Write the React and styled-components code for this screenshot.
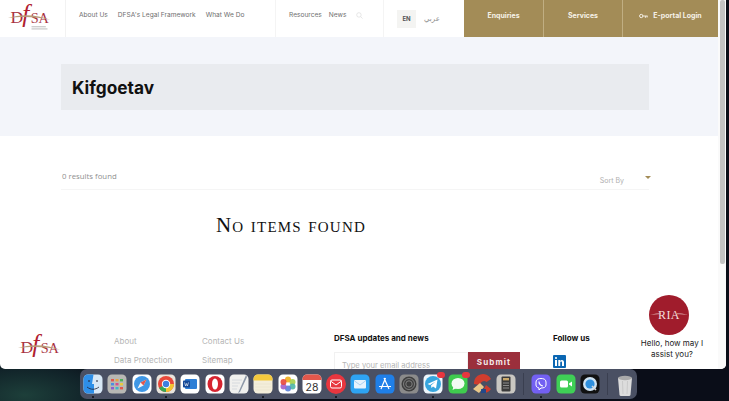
import styled, { createGlobalStyle } from "styled-components";

const GlobalStyle = createGlobalStyle`
  html, body {
    margin: 0;
    padding: 0;
    width: 729px;
    height: 401px;
    overflow: hidden;
    background: #0a0d18;
    font-family: Inter, "Liberation Sans", sans-serif;
  }
`;

const Desktop = styled.div`
  width: 729px;
  height: 401px;
  overflow: hidden;
  display: flex;
  flex-direction: column;
  background: radial-gradient(ellipse 110px 45px at 25px 395px, #1d3f3a 0%, rgba(20, 44, 48, 0.7) 60%, transparent 100%), #0a0d18;
`;

const Window = styled.div`
  position: relative;
  width: 726px;
  height: 369px;
  flex: none;
  display: flex;
  overflow: hidden;
  background: #fff;
  border-bottom-right-radius: 5px;
  border-bottom-left-radius: 5px;
`;

const Page = styled.div`
  width: 718px;
  flex: none;
  display: flex;
  flex-direction: column;
`;

const Scrollbar = styled.div`
  flex: 1;
  padding: 0 1px 0 2px;
  background: #fafafa;
`;

const Thumb = styled.div`
  height: 264px;
  background: #c2c2c2;
  border-radius: 2px;
`;

const Header = styled.header`
  height: 37px;
  flex: none;
  display: flex;
  background: #fff;
`;

const LogoCell = styled.div`
  width: 66px;
  display: flex;
  align-items: center;
  padding-left: 8px;
  box-sizing: border-box;
  border-right: 1px solid #f2f2f2;
`;

const NavGroup = styled.nav`
  width: ${(p) => p.$width}px;
  box-sizing: border-box;
  display: flex;
  align-items: center;
  gap: ${(p) => p.$gap}px;
  padding: 0 0 7px ${(p) => p.$left}px;
  border-right: 1px solid #f4f4f4;
`;

const NavLink = styled.a`
  font-size: 6.6px;
  color: #6f6f6f;
  white-space: nowrap;
`;

const LangCell = styled.div`
  width: 80px;
  display: flex;
  align-items: center;
  gap: 8px;
  padding-left: 13px;
  box-sizing: border-box;
`;

const LangActive = styled.span`
  width: 19px;
  height: 18px;
  display: flex;
  align-items: center;
  justify-content: center;
  background: #f4f4f2;
  font-size: 6px;
  font-weight: 700;
  color: #555;
`;

const LangOther = styled.span`
  font-size: 7px;
  color: #8c8c8c;
  font-family: "DejaVu Sans", sans-serif;
`;

const GoldButton = styled.a`
  width: ${(p) => p.$width}px;
  box-sizing: border-box;
  display: flex;
  align-items: center;
  justify-content: center;
  gap: 5px;
  padding-bottom: 6px;
  background: #a38c57;
  border-right: 1px solid #c0ae82;
  font-size: 7px;
  font-weight: 700;
  color: #f6f2e8;
  white-space: nowrap;
  &:last-child {
    border-right: none;
  }
`;

const Hero = styled.section`
  height: 99px;
  flex: none;
  box-sizing: border-box;
  padding: 27px 69px 26px 61px;
  background: #f3f5fa;
`;

const TitleBox = styled.div`
  height: 46px;
  display: flex;
  align-items: center;
  padding-left: 11px;
  background: #e9ebef;
`;

const Title = styled.h1`
  margin: 0;
  font-size: 17.3px;
  font-weight: 700;
  color: #111;
`;

const Results = styled.section`
  height: 164px;
  flex: none;
  box-sizing: border-box;
  padding: 0 69px 0 61px;
`;

const ResultsBar = styled.div`
  height: 54px;
  box-sizing: border-box;
  display: flex;
  justify-content: space-between;
  padding: 35px 0 0 1px;
  border-bottom: 1px solid #f5f5f5;
`;

const ResultCount = styled.span`
  font-family: "Open Sans", sans-serif;
  font-size: 7.8px;
  color: #8f8f8f;
`;

const SortBy = styled.div`
  display: flex;
  gap: 21px;
  align-items: flex-start;
  font-size: 7px;
  color: #b0b0b0;
  padding-top: 5px;
  margin-right: -2px;
`;

const Caret = styled.span`
  width: 0;
  height: 0;
  border-left: 3.5px solid transparent;
  border-right: 3.5px solid transparent;
  border-top: 3.5px solid #a38c57;
`;

const NoItems = styled.h2`
  margin: 23px 0 0 155px;
  font-family: "Liberation Serif", serif;
  font-size: 21px;
  font-weight: 400;
  font-variant: small-caps;
  letter-spacing: 1.2px;
  color: #111;
`;

const Footer = styled.footer`
  flex: 1;
  display: flex;
  overflow: hidden;
  padding-top: 33px;
`;

const FooterLogo = styled.div`
  width: 114px;
  padding-left: 18px;
  box-sizing: border-box;
`;

const LinkColumn = styled.div`
  width: 88px;
  display: flex;
  flex-direction: column;
  gap: 9px;
  padding-top: 3px;
`;

const FooterLink = styled.a`
  font-size: 8px;
  line-height: 10px;
  color: #b5b5b5;
  white-space: nowrap;
`;

const Newsletter = styled.div`
  width: 219px;
  margin-left: 44px;
`;

const FooterHeading = styled.h3`
  margin: 0 0 9px;
  font-size: 8px;
  line-height: 10px;
  font-weight: 700;
  color: #111;
`;

const Subscribe = styled.div`
  width: 186px;
  height: 30px;
  display: flex;
`;

const EmailField = styled.div`
  flex: 1;
  box-sizing: border-box;
  padding: 8px 0 0 7px;
  border: 1px solid #f1f1f1;
  font-size: 7.6px;
  color: #b5b5b5;
  white-space: nowrap;
`;

const Submit = styled.button`
  width: 52px;
  border: none;
  padding: 0 0 10px;
  background: #9b2f3c;
  font-family: inherit;
  font-size: 8px;
  font-weight: 700;
  letter-spacing: 1.1px;
  color: #f5e9e9;
`;

const Chat = styled.div`
  position: absolute;
  left: 638px;
  top: 295px;
  width: 68px;
  display: flex;
  flex-direction: column;
  align-items: center;
  gap: 3px;
`;

const ChatAvatar = styled.div`
  position: relative;
  width: 40px;
  height: 40px;
  margin-left: -6px;
  border-radius: 50%;
  background: #a01c2c;
  display: flex;
  align-items: center;
  justify-content: center;
  font-family: "Liberation Serif", serif;
  font-size: 12px;
  letter-spacing: 0.4px;
  color: #f3dfdf;
`;

const AvatarSwoosh = styled.svg`
  position: absolute;
  left: 0;
  top: 14px;
`;

const ChatText = styled.div`
  font-size: 8px;
  line-height: 11px;
  text-align: center;
  color: #222;
`;

const Dock = styled.div`
  position: relative;
  width: 557px;
  height: 30px;
  margin-left: 80px;
  display: flex;
  align-items: center;
  box-sizing: border-box;
  padding-left: 1px;
  border-radius: 7px;
  background: #4a5063;
`;

const DockItem = styled.div`
  position: relative;
  width: 24.3px;
  height: 20px;
  flex: none;
  display: flex;
  justify-content: center;
`;

const RunningDot = styled.span`
  position: absolute;
  left: 50%;
  bottom: -4px;
  width: 2px;
  height: 2px;
  margin-left: -1px;
  border-radius: 50%;
  background: #0b0d14;
`;

const DockSeparator = styled.div`
  width: 1px;
  height: 22px;
  flex: none;
  margin: 0 ${(p) => p.$gap}px;
  background: #3a3f50;
`;

const Badge = styled.span`
  position: absolute;
  top: -2px;
  right: 0;
  width: 8px;
  height: 6px;
  border-radius: 3px;
  background: #e8363f;
`;

const Logo = ({ width, small }) => (
  <svg width={width} height={width * 0.72} viewBox="0 0 50 36" overflow="visible">
    <text x="3" y="24" fontFamily="Liberation Serif" fontSize="21" fill="#a8323f">D</text>
    <text x="17" y="23" fontFamily="Liberation Serif" fontStyle="italic" fontSize="30" fill="#b0202f">f</text>
    <text x="27" y="24" fontFamily="Liberation Serif" fontSize="17" fill="#a8323f">SA</text>
    <path d="M0 18 C14 13 34 13 50 20 C34 16 14 16 0 18Z" fill="#b99a7a" />
    {small && (
      <g fill="#9a9a9a">
        <rect x="28" y="28" width="17" height="0.8" />
        <rect x="28" y="30.5" width="19" height="0.8" />
      </g>
    )}
  </svg>
);

const Icon = ({ children, bg = "#fff" }) => (
  <svg width="20" height="20" viewBox="0 0 20 20">
    <rect x="0.5" y="0.5" width="19" height="19" rx="4.5" fill={bg} />
    {children}
  </svg>
);

const dockIcons = [
  {
    dot: true,
    el: (
      <Icon bg="#d8e8f6">
        <path d="M5 0.5H10.5L9 10H11V19.5H5A4.5 4.5 0 0 1 0.5 15V5A4.5 4.5 0 0 1 5 0.5Z" fill="#2e8fe8" />
        <path d="M6 6V8M14 6V8" stroke="#223" strokeWidth="1" />
        <path d="M4 13C8 16 12 16 16 13" stroke="#223" strokeWidth="0.8" fill="none" />
      </Icon>
    ),
  },
  {
    el: (
      <Icon bg="#b8b8b4">
        <rect x="4" y="5" width="3" height="2.4" fill="#e2574c" />
        <rect x="8.5" y="5" width="3" height="2.4" fill="#e8a33d" />
        <rect x="13" y="5" width="3" height="2.4" fill="#4ab05a" />
        <rect x="4" y="9" width="3" height="2.4" fill="#4a8fe0" />
        <rect x="8.5" y="9" width="3" height="2.4" fill="#d64f8e" />
        <rect x="13" y="9" width="3" height="2.4" fill="#e8c93d" />
        <rect x="4" y="13" width="3" height="2.4" fill="#8a5fd0" />
        <rect x="8.5" y="13" width="3" height="2.4" fill="#3db8c9" />
        <rect x="13" y="13" width="3" height="2.4" fill="#e2574c" />
      </Icon>
    ),
  },
  {
    el: (
      <Icon>
        <circle cx="10" cy="10" r="8" fill="#3f97e6" />
        <path d="M14.5 5.5L11.5 11.5L5.5 14.5L8.5 8.5Z" fill="#f2f6fb" />
        <path d="M14.5 5.5L11.5 11.5L8.5 8.5Z" fill="#e2574c" />
      </Icon>
    ),
  },
  {
    dot: true,
    el: (
      <Icon bg="#e9e4dc">
        <circle cx="10" cy="10" r="8" fill="#e8483a" />
        <path d="M10 10L3 14A8 8 0 0 0 10 18Z" fill="#3aa655" />
        <path d="M10 10L10 18A8 8 0 0 0 18 10Z" fill="#f4c430" />
        <circle cx="10" cy="10" r="4.2" fill="#fff" />
        <circle cx="10" cy="10" r="3.2" fill="#3f7fe0" />
      </Icon>
    ),
  },
  {
    el: (
      <Icon>
        <rect x="5" y="5" width="12" height="10" rx="1" fill="#2e7fd6" />
        <rect x="3" y="6.5" width="7" height="7" rx="0.8" fill="#174a97" />
        <path d="M4.5 8.5L5.6 12L6.5 9.5L7.4 12L8.5 8.5" stroke="#fff" strokeWidth="0.6" fill="none" />
      </Icon>
    ),
  },
  {
    el: (
      <Icon>
        <ellipse cx="10" cy="10" rx="7.5" ry="8" fill="#d6232f" />
        <ellipse cx="10" cy="10" rx="3" ry="5.6" fill="#fff" />
      </Icon>
    ),
  },
  {
    el: (
      <Icon bg="#f0f0ee">
        <path d="M3 6H13M3 9H11M3 12H9M3 15H8" stroke="#c8ccd4" strokeWidth="0.6" />
        <path d="M17 1L10 17L9 19L11 18L18 3Z" fill="#8d98a8" />
      </Icon>
    ),
  },
  {
    dot: true,
    el: (
      <Icon bg="#f4eeda">
        <path d="M5 0.5H15A4.5 4.5 0 0 1 19.5 5V6.5H0.5V5A4.5 4.5 0 0 1 5 0.5Z" fill="#f4c93e" />
        <path d="M2 10H18M2 13H18M2 16H18" stroke="#e4dcc4" strokeWidth="0.5" />
      </Icon>
    ),
  },
  {
    el: (
      <Icon>
        <circle cx="10" cy="5.5" r="3" fill="#f2b632" />
        <circle cx="14.5" cy="8" r="3" fill="#a6cf4b" opacity="0.9" />
        <circle cx="14.5" cy="12.5" r="3" fill="#4db6a6" opacity="0.9" />
        <circle cx="10" cy="14.5" r="3" fill="#5a80d8" opacity="0.9" />
        <circle cx="5.5" cy="12.5" r="3" fill="#a45fc8" opacity="0.9" />
        <circle cx="5.5" cy="8" r="3" fill="#e8483a" opacity="0.9" />
      </Icon>
    ),
  },
  {
    el: (
      <Icon>
        <path d="M5 0.5H15A4.5 4.5 0 0 1 19.5 5V6H0.5V5A4.5 4.5 0 0 1 5 0.5Z" fill="#e2574c" />
        <text x="10" y="16.5" textAnchor="middle" fontFamily="Inter" fontSize="10.5" fill="#333">28</text>
      </Icon>
    ),
  },
  {
    dot: true,
    el: (
      <svg width="20" height="20" viewBox="0 0 20 20">
        <circle cx="10" cy="10" r="10" fill="#e8363f" />
        <rect x="4.5" y="6" width="11" height="8" rx="1.5" fill="none" stroke="#fff" strokeWidth="1" />
        <path d="M4.5 7L10 11L15.5 7" fill="none" stroke="#fff" strokeWidth="1" />
      </svg>
    ),
  },
  {
    el: (
      <Icon bg="#2ea3f2">
        <rect x="4" y="6" width="12" height="8.5" rx="1" fill="#e8f3fc" />
        <path d="M4 6.5L10 11L16 6.5" fill="none" stroke="#9cc8ec" strokeWidth="0.8" />
      </Icon>
    ),
  },
  {
    el: (
      <Icon bg="#1f7fe8">
        <path d="M10.5 4L6 15M9 4L14 15M4 12.5H16" stroke="#fff" strokeWidth="1.2" fill="none" />
      </Icon>
    ),
  },
  {
    el: (
      <Icon bg="#8b8b8b">
        <circle cx="10" cy="10" r="7.5" fill="#3e3e3e" />
        <circle cx="10" cy="10" r="5.5" fill="none" stroke="#8f8f8f" strokeWidth="0.8" />
        <circle cx="10" cy="10" r="3.2" fill="none" stroke="#8f8f8f" strokeWidth="0.8" />
      </Icon>
    ),
  },
  {
    dot: true,
    badge: true,
    el: (
      <Icon bg="#eef6fb">
        <circle cx="10" cy="10" r="8" fill="#37a5dd" />
        <path d="M4.5 10L14.5 5.5L13 14.5L10 12.5L8.5 14L8 11.5L12.5 7.5L7 11Z" fill="#fff" />
      </Icon>
    ),
  },
  {
    badge: true,
    el: (
      <Icon bg="#3fcb4e">
        <ellipse cx="10" cy="9.5" rx="6.5" ry="5.5" fill="#f2fbf2" />
        <path d="M5.5 12.5L4.5 16L8.5 14Z" fill="#f2fbf2" />
      </Icon>
    ),
  },
  {
    el: (
      <svg width="22" height="20" viewBox="0 0 22 20">
        <path d="M3 10A9 9 0 0 1 20 5L15.5 8A4 4 0 0 0 9 11Z" fill="#cf3d2e" />
        <path d="M15 11L20 15A9 9 0 0 1 12 19L13 15Z" fill="#cf3d2e" />
        <path d="M9 9L13 13L8 19L2 15Z" fill="#e9c88a" />
        <rect x="10" y="15" width="5" height="4" rx="0.5" fill="#234a8a" />
      </svg>
    ),
  },
  {
    el: (
      <Icon bg="#c9c7c2">
        <rect x="5.5" y="2.5" width="9" height="15" rx="1" fill="#3a3a3a" />
        <rect x="7" y="4" width="6" height="2.4" fill="#c9a86a" />
        <path d="M7.5 9H8.5M9.5 9H10.5M11.5 9H12.5M7.5 11.5H8.5M9.5 11.5H10.5M11.5 11.5H12.5M7.5 14H8.5M9.5 14H10.5M11.5 14H12.5" stroke="#ddd" strokeWidth="1.2" />
      </Icon>
    ),
  },
  { separator: 5 },
  {
    dot: true,
    el: (
      <Icon bg="#7360f2">
        <path d="M5 8C5 5 8 4.5 10 4.5S15 5 15 8V11C15 13.5 12.5 14 10 14L8 16V14C6 13.5 5 12.5 5 11Z" fill="none" stroke="#fff" strokeWidth="1" />
        <path d="M8 7.5C8 10 9.5 11.5 12 12" fill="none" stroke="#fff" strokeWidth="1.2" />
      </Icon>
    ),
  },
  {
    el: (
      <Icon bg="#3fcf56">
        <rect x="4" y="6.5" width="8" height="7" rx="1.5" fill="#fff" />
        <path d="M13 9.5L16 7.5V12.5L13 10.5Z" fill="#fff" />
      </Icon>
    ),
  },
  {
    el: (
      <Icon bg="#111">
        <circle cx="10" cy="10" r="7" fill="#cfe3f2" />
        <circle cx="10" cy="10" r="4.6" fill="#2f8fdc" />
        <path d="M12 12L16 16" stroke="#d8d8d8" strokeWidth="1.6" />
      </Icon>
    ),
  },
  { separator: 5 },
  {
    el: (
      <svg width="20" height="23" viewBox="0 0 20 23">
        <path d="M3 4H17L15.5 21A1.5 1.5 0 0 1 14 22H6A1.5 1.5 0 0 1 4.5 21Z" fill="#dcdcdc" />
        <ellipse cx="10" cy="4" rx="7" ry="2.2" fill="#aaa" />
        <path d="M7.5 7L8 20M12.5 7L12 20" stroke="#bcbcbc" strokeWidth="0.6" />
      </svg>
    ),
  },
];

const App = () => (
  <Desktop>
    <GlobalStyle />
    <Window>
      <Page>
        <Header>
          <LogoCell>
            <Logo width={42} small />
          </LogoCell>
          <NavGroup $width={210} $left={13} $gap={10}>
            <NavLink>About Us</NavLink>
            <NavLink>DFSA's Legal Framework</NavLink>
            <NavLink>What We Do</NavLink>
          </NavGroup>
          <NavGroup $width={108} $left={13} $gap={7}>
            <NavLink>Resources</NavLink>
            <NavLink>News</NavLink>
            <svg width="7" height="7" viewBox="0 0 10 10" style={{ marginLeft: 3 }}>
              <circle cx="4.2" cy="4.2" r="3.2" fill="none" stroke="#ddd" strokeWidth="1" />
              <path d="M6.6 6.6L9.4 9.4" stroke="#ddd" strokeWidth="1" />
            </svg>
          </NavGroup>
          <LangCell>
            <LangActive>EN</LangActive>
            <LangOther>عربي</LangOther>
          </LangCell>
          <GoldButton $width={80}>Enquiries</GoldButton>
          <GoldButton $width={79}>Services</GoldButton>
          <GoldButton $width={95}>
            <svg width="9" height="6" viewBox="0 0 12 8">
              <circle cx="3" cy="4" r="2.2" fill="none" stroke="#f6f2e8" strokeWidth="1.3" />
              <path d="M5 4H11.5M8.5 4V6.5M10.8 4V6" stroke="#f6f2e8" strokeWidth="1.2" />
            </svg>
            E-portal Login
          </GoldButton>
        </Header>
        <Hero>
          <TitleBox>
            <Title>Kifgoetav</Title>
          </TitleBox>
        </Hero>
        <Results>
          <ResultsBar>
            <ResultCount>0 results found</ResultCount>
            <SortBy>
              Sort By
              <Caret />
            </SortBy>
          </ResultsBar>
          <NoItems>No items found</NoItems>
        </Results>
        <Footer>
          <FooterLogo>
            <Logo width={42} />
          </FooterLogo>
          <LinkColumn>
            <FooterLink>About</FooterLink>
            <FooterLink>Data Protection</FooterLink>
          </LinkColumn>
          <LinkColumn>
            <FooterLink>Contact Us</FooterLink>
            <FooterLink>Sitemap</FooterLink>
          </LinkColumn>
          <Newsletter>
            <FooterHeading>DFSA updates and news</FooterHeading>
            <Subscribe>
              <EmailField>Type your email address</EmailField>
              <Submit>Submit</Submit>
            </Subscribe>
          </Newsletter>
          <div>
            <FooterHeading>Follow us</FooterHeading>
            <svg width="13" height="13" viewBox="0 0 13 13">
              <rect width="13" height="13" rx="1" fill="#0a66b2" />
              <rect x="2" y="5" width="2" height="6" fill="#fff" />
              <circle cx="3" cy="3" r="1.1" fill="#fff" />
              <path d="M5.3 5H7.2V5.9C7.6 5.2 8.3 4.9 9 4.9C10.5 4.9 11 5.9 11 7.3V11H9V7.8C9 7 8.8 6.5 8.1 6.5C7.5 6.5 7.2 7 7.2 7.8V11H5.3Z" fill="#fff" />
            </svg>
          </div>
        </Footer>
      </Page>
      <Scrollbar>
        <Thumb />
      </Scrollbar>
      <Chat>
        <ChatAvatar>
          <AvatarSwoosh width="40" height="12" viewBox="0 0 40 12">
            <path d="M1 6C5 4.5 9 4.2 12 4.2L12 5.2C8 5.2 5 5.5 1 6ZM39 6C35 4.5 31 4.2 28 4.2L28 5.2C32 5.2 35 5.5 39 6Z" fill="#e3b8b8" opacity="0.8" />
          </AvatarSwoosh>
          RIA
        </ChatAvatar>
        <ChatText>
          Hello, how may I
          <br />
          assist you?
        </ChatText>
      </Chat>
    </Window>
    <Dock>
      {dockIcons.map((item, i) =>
        item.separator ? (
          <DockSeparator key={i} $gap={item.separator} />
        ) : (
          <DockItem key={i}>
            {item.el}
            {item.badge && <Badge />}
            {item.dot && <RunningDot />}
          </DockItem>
        )
      )}
    </Dock>
  </Desktop>
);

export default App;
